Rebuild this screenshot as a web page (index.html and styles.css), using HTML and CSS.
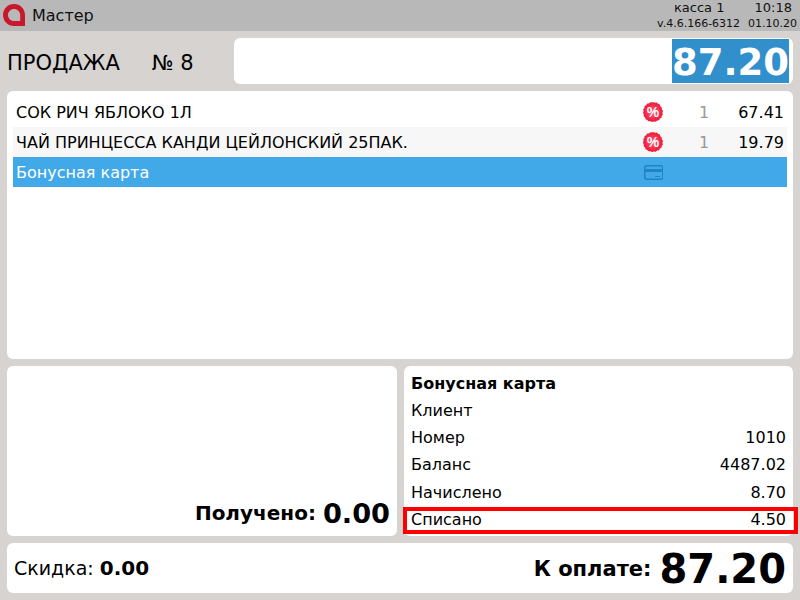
FILE: index.html
```html
<!DOCTYPE html>
<html lang="ru">
<head>
<meta charset="utf-8">
<title>Мастер</title>
<link rel="stylesheet" href="styles.css">
</head>
<body>
<header class="topbar">
  <svg class="logo" viewBox="0 0 22 22" width="22" height="22"><path fill-rule="evenodd" fill="#c8182c" d="M11 0C4.900 0 0 4.900 0 11s4.900 11 11 11h11V11C22 4.900 17.100 0 11 0ZM11 5C7.700 5 5 7.700 5 11s2.700 6 6 6h6.200V11C17.200 7.700 14.300 5 11 5Z"/></svg>
  <span class="app">Мастер</span>
  <div class="status">
    <div class="status-row"><span class="kassa">касса 1</span><span class="time">10:18</span></div>
    <div class="status-row small"><span>v.4.6.166-6312</span><span>01.10.20</span></div>
  </div>
</header>
<section class="sale">
  <div class="sale-title"><span>ПРОДАЖА</span><span class="num">№ 8</span></div>
  <div class="sale-total"><span class="sale-sum">87.20</span></div>
</section>
<section class="card items">
  <div class="item"><span class="name">СОК РИЧ ЯБЛОКО 1Л</span>
    <svg class="ico" viewBox="0 0 20 20" width="20" height="20"><defs><radialGradient id="badge"><stop offset="0" stop-color="#ff5a78"/><stop offset="1" stop-color="#f01838"/></radialGradient></defs><polygon fill="url(#badge)" points="10,0 12,0.700 13.800,0.500 15,1.800 16.700,2.600 17.300,4.300 18.800,5.500 18.800,7.300 20,9 19.400,10.700 19.900,12.500 18.700,13.900 18.500,15.700 16.900,16.600 16,18.200 14.200,18.400 12.800,19.700 11,19.400 9,20 7.300,19.200 5.500,19.200 4.300,17.900 2.600,17.200 2.100,15.500 0.700,14.300 0.800,12.500 0,10.800 0.600,9.100 0.200,7.300 1.400,5.900 1.600,4.100 3.200,3.200 4.100,1.600 5.900,1.400 7.300,0.200 9,0.500"/><text class="pct" x="10" y="15">%</text></svg>
    <span class="qty">1</span><span class="price">67.41</span></div>
  <div class="item alt"><span class="name">ЧАЙ ПРИНЦЕССА КАНДИ ЦЕЙЛОНСКИЙ 25ПАК.</span>
    <svg class="ico" viewBox="0 0 20 20" width="20" height="20"><polygon fill="url(#badge)" points="10,0 12,0.700 13.800,0.500 15,1.800 16.700,2.600 17.300,4.300 18.800,5.500 18.800,7.300 20,9 19.400,10.700 19.900,12.500 18.700,13.900 18.500,15.700 16.900,16.600 16,18.200 14.200,18.400 12.800,19.700 11,19.400 9,20 7.300,19.200 5.500,19.200 4.300,17.900 2.600,17.200 2.100,15.500 0.700,14.300 0.800,12.500 0,10.800 0.600,9.100 0.200,7.300 1.400,5.900 1.600,4.100 3.200,3.200 4.100,1.600 5.900,1.400 7.300,0.200 9,0.500"/><text class="pct" x="10" y="15">%</text></svg>
    <span class="qty">1</span><span class="price">19.79</span></div>
  <div class="item sel"><span class="name">Бонусная карта</span>
    <svg class="ico" viewBox="0 0 20 20" width="20" height="20" fill="none" stroke="#1f83c4" stroke-width="1.500"><rect x="1.750" y="3.750" width="18" height="13.500" rx="2"/><path d="M2 8.500h18" stroke-width="3"/><path d="M12 14.500h5" stroke-width="1"/></svg>
    <span class="qty"></span><span class="price"></span></div>
</section>
<section class="middle">
  <div class="card received"><span class="rec-label">Получено:</span><span class="rec-sum">0.00</span></div>
  <div class="card bonus">
    <div class="b-row b-head">Бонусная карта</div>
    <div class="b-row"><span>Клиент</span></div>
    <div class="b-row"><span>Номер</span><span>1010</span></div>
    <div class="b-row"><span>Баланс</span><span>4487.02</span></div>
    <div class="b-row"><span>Начислено</span><span>8.70</span></div>
    <div class="b-row marked"><span>Списано</span><span>4.50</span></div>
  </div>
</section>
<footer class="card bottom">
  <div class="discount">Скидка: <b>0.00</b></div>
  <div class="topay"><span class="pay-label">К оплате:</span><span class="pay-sum">87.20</span></div>
</footer>
</body>
</html>
```
FILE: styles.css
```css
* { box-sizing: border-box; }
html, body { margin: 0; height: 600px; overflow: hidden; }
body {
  background: #d6d3d0;
  font-family: "DejaVu Sans", sans-serif;
  color: #000;
  display: flex;
  flex-direction: column;
}
.topbar {
  height: 31px;
  background: #b8b8b8;
  display: flex;
  align-items: center;
  padding: 0 3px;
  flex: none;
}
.logo { flex: none; width: 22px; height: 22px; margin-bottom: 1px; }
.app { margin-left: 7px; font-size: 16px; color: #111; }
.status { margin-left: auto; font-size: 13px; width: 140px; color: #111; }
.status-row { display: flex; justify-content: space-between; line-height: 16px; }
.status-row.small { font-size: 11px; line-height: 15px; }
.kassa { margin-left: 17px; }
.time { margin-right: 5px; }
.sale { display: flex; height: 60px; padding: 7px 7px 0; flex: none; }
.sale-title { width: 227px; font-size: 21px; display: flex; align-items: center; padding-bottom: 3px; }
.num { margin-left: 32px; }
.sale-total { flex: 1; background: #fff; border-radius: 6px; height: 46px; display: flex; justify-content: flex-end; padding: 1px 4px 1px 0; }
.sale-sum { background: #318fcb; color: #fff; font-weight: bold; font-size: 37px; width: 117px; text-align: center; line-height: 47px; height: 44px; }
.card { background: #fff; border-radius: 6px; }
.items { height: 268px; margin: 0 7px; padding: 6px 6px; flex: none; }
.item { display: flex; align-items: center; height: 30px; padding: 0 3px; font-size: 16px; }
.item.alt { background: #f7f7f7; }
.item.sel { background: #42a9e8; color: #fff; }
.name { flex: 1; }
.ico { flex: none; margin-right: 33px; }
.pct { font-family: "Liberation Sans", sans-serif; font-size: 14px; font-weight: bold; fill: #fff; text-anchor: middle; }
.qty { width: 16px; color: #999; text-align: center; }
.price { width: 72px; text-align: right; }
.middle { display: flex; gap: 7px; margin: 7px 7px 0; height: 170px; flex: none; }
.received { width: 390px; display: flex; justify-content: flex-end; align-items: center; padding: 124px 7px 0 0; }
.rec-label { font-size: 20px; font-weight: bold; }
.rec-sum { font-size: 27.200px; font-weight: bold; margin-left: 7px; }
.bonus { flex: 1; padding-top: 3.800px; }
.b-row { display: flex; justify-content: space-between; height: 27.200px; align-items: center; padding: 0 7px; font-size: 16px; }
.b-head { font-weight: bold; }
.marked { border: 4px solid #f00; height: 27px; margin: 1.200px -5px 0 -1px; padding: 0 8px 2px 4px; }
.bottom { height: 50px; margin: 7px 7px 0; display: flex; justify-content: space-between; align-items: center; padding: 0 7px; flex: none; }
.discount { font-size: 19px; }
.discount b { font-size: 20px; }
.topay { display: flex; align-items: center; padding-top: 2px; }
.pay-label { font-size: 21px; font-weight: bold; }
.pay-sum { font-size: 40px; font-weight: bold; margin-left: 8px; }
```
